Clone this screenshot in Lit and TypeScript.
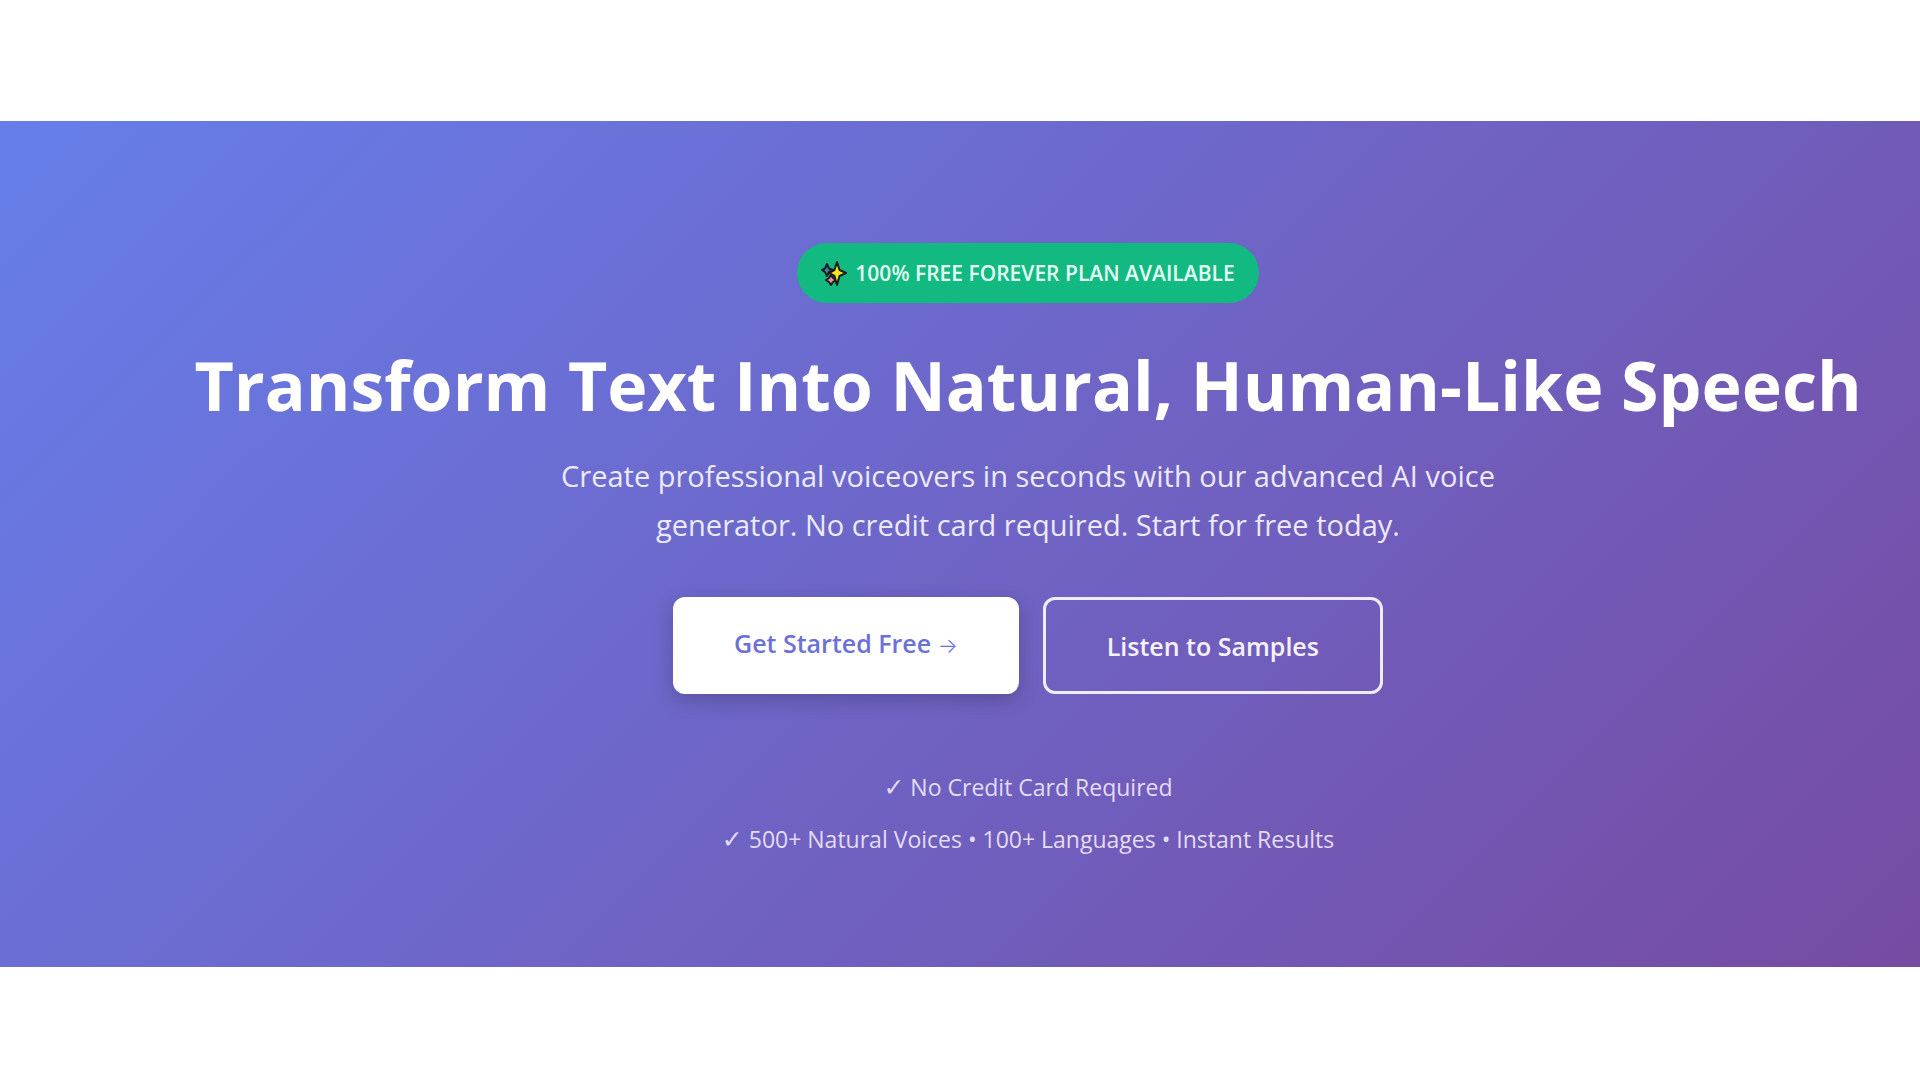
import { LitElement, html, css, svg } from "lit";
import { customElement } from "lit/decorators.js";

const sparkles = svg`
  <g stroke="#1d1d1b" stroke-width="2" stroke-linejoin="round">
    <path d="M6 4 L8 8.500 L12 10 L8 12 L6 16 L4 12 L1 10 L4 8.500 Z" fill="#3f86a8"/>
    <path d="M10 15 L12 18 L15 20 L12 22 L10 25 L8 22 L5 20 L8 18 Z" fill="#e58fb0"/>
    <path d="M16 2 L18.500 10 L25 13 L18.500 16 L16 25 L13.500 16 L8 13 L13.500 10 Z" fill="#fde724"/>
  </g>`;

@customElement("app-root")
export class AppRoot extends LitElement {
  static styles = css`
    :host {
      display: flex;
      flex-direction: column;
      justify-content: center;
      box-sizing: border-box;
      min-height: 100vh;
      padding: 7px 0 0;
      background: #fff;
      font-family: "Open Sans", "Noto Sans", sans-serif;
      color: #fff;
    }
    .hero {
      display: flex;
      flex-direction: column;
      align-items: center;
      padding: 122px 0 102px 136px;
      background: linear-gradient(135deg, #667eea 0%, #764ba2 100%);
      text-align: center;
    }
    .badge {
      display: flex;
      align-items: center;
      gap: 8px;
      padding: 16px 24px;
      border-radius: 32px;
      background: #12b981;
      color: #e4fff4;
      font-size: 21px;
      line-height: 28px;
      font-weight: 600;
    }
    .sparkles {
      width: 26px;
      height: 26px;
    }
    h1 {
      margin: 38px 0 22px;
      font-size: 68px;
      line-height: 88px;
      font-weight: 700;
      white-space: nowrap;
    }
    .lead {
      max-width: 980px;
      margin: 0;
      font-size: 29px;
      line-height: 49px;
      color: #ebe9fb;
    }
    .actions {
      display: flex;
      gap: 24px;
      margin: 48px 0 0;
    }
    .button {
      box-sizing: border-box;
      padding: 26px 61px;
      border-radius: 12px;
      font-size: 25px;
      line-height: 40px;
      font-weight: 600;
      text-decoration: none;
    }
    .primary {
      padding-bottom: 31px;
      background: #fff;
      color: #6c70d9;
      box-shadow: 0 6px 20px rgba(0, 0, 0, 0.2);
    }
    .arrow {
      font-family: "Inter", sans-serif;
      font-size: 21px;
      line-height: 24px;
      font-weight: 300;
    }
    .outline {
      padding-bottom: 25px;
      border: 3px solid #f1ecfc;
      color: #f6f2ff;
    }
    .trust {
      margin: 67px 0 0;
      padding: 0;
      list-style: none;
      font-size: 23px;
      line-height: 52px;
      color: #e2dcf5;
    }
    .check {
      font-family: "DejaVu Sans", sans-serif;
      font-size: 25px;
      line-height: 24px;
    }
  `;

  render() {
    return html`
      <section class="hero">
        <div class="badge">
          <svg class="sparkles" viewBox="0 0 26 26" aria-hidden="true">${sparkles}</svg>
          <span>100% FREE FOREVER PLAN AVAILABLE</span>
        </div>
        <h1>Transform Text Into Natural, Human-Like Speech</h1>
        <p class="lead">
          Create professional voiceovers in seconds with our advanced AI voice
          generator. No credit card required. Start for free today.
        </p>
        <div class="actions">
          <a class="button primary" href="#start">Get Started Free <span class="arrow">→</span></a>
          <a class="button outline" href="#samples">Listen to Samples</a>
        </div>
        <ul class="trust">
          <li><span class="check">✓</span> No Credit Card Required</li>
          <li><span class="check">✓</span> 500+ Natural Voices • 100+ Languages • Instant Results</li>
        </ul>
      </section>
    `;
  }
}
